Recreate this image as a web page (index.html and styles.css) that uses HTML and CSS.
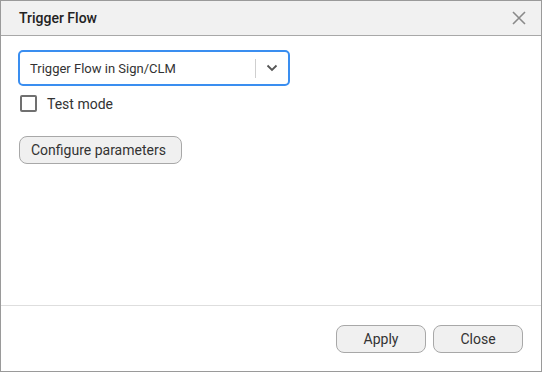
FILE: index.html
```html
<!DOCTYPE html>
<html>
<head>
<meta charset="utf-8">
<link rel="stylesheet" href="styles.css">
</head>
<body>
<div class="dialog">
  <div class="header">
    <span class="title">Trigger Flow</span>
    <svg class="close-x" width="14" height="14" viewBox="0 0 14 14"><path d="M1 1L13 13M13 1L1 13" stroke="#8a8a8a" stroke-width="1.6" fill="none"/></svg>
  </div>
  <div class="body">
    <div class="select">
      <span class="select-text">Trigger Flow in Sign/CLM</span>
      <span class="select-sep"></span>
      <svg class="chev" width="12" height="8" viewBox="0 0 12 8"><path d="M1.5 1.5L6 6L10.5 1.5" stroke="#555" stroke-width="1.8" fill="none"/></svg>
    </div>
    <label class="check-row">
      <span class="checkbox"></span>
      <span class="check-label">Test mode</span>
    </label>
    <div class="cfg-row">
      <button class="btn btn-cfg">Configure parameters</button>
    </div>
  </div>
  <div class="footer">
    <button class="btn btn-foot">Apply</button>
    <button class="btn btn-foot">Close</button>
  </div>
</div>
</body>
</html>
```
FILE: styles.css
```css
* { box-sizing: border-box; }
html, body { margin: 0; padding: 0; }
body {
  width: 542px;
  height: 372px;
  font-family: Roboto, "Liberation Sans", sans-serif;
  color: #333;
  background: #fff;
}
.dialog {
  width: 542px;
  height: 372px;
  border: 1px solid #9a9a9a;
  display: flex;
  flex-direction: column;
}
.header {
  height: 35px;
  background: #f1f1f1;
  border-bottom: 1px solid #a8a8a8;
  display: flex;
  align-items: center;
  justify-content: space-between;
  padding: 0 15px 0 18px;
  flex-shrink: 0;
}
.title {
  font-size: 14px;
  font-weight: 500;
  color: #222;
}
.body {
  flex: 1;
  padding: 14px 17px 0 17px;
  border-bottom: 1px solid #dedede;
}
.select {
  width: 272px;
  height: 36px;
  border: 2px solid #3a8ef0;
  border-radius: 5px;
  display: flex;
  align-items: center;
  padding: 0 10px 0 10px;
}
.select-text {
  flex: 1;
  font-size: 13px;
  color: #333;
}
.select-sep {
  width: 1px;
  height: 19px;
  background: #cfcfcf;
  margin-right: 10px;
}
.chev { display: block; }
.check-row {
  display: flex;
  align-items: center;
  margin-top: 9px;
  margin-left: 2px;
}
.checkbox {
  width: 17px;
  height: 17px;
  border: 2px solid #707070;
  border-radius: 2px;
  margin-right: 10px;
}
.check-label {
  font-size: 14px;
  color: #333;
}
.cfg-row {
  margin-top: 24px;
  margin-left: 1px;
}
.btn {
  font-family: Roboto, "Liberation Sans", sans-serif;
  font-size: 14px;
  color: #333;
  background: #f0f0f0;
  border: 1px solid #a8a8a8;
  border-radius: 8px;
  height: 28px;
  padding: 0 11px;
}
.btn-cfg {
  padding: 0 12px 0 11px;
  min-width: 163px;
  text-align: left;
}
.footer {
  height: 65px;
  flex-shrink: 0;
  display: flex;
  justify-content: flex-end;
  align-items: flex-start;
  gap: 7px;
  padding: 19px 18px 0 0;
}
.btn-foot {
  width: 90px;
}
```
